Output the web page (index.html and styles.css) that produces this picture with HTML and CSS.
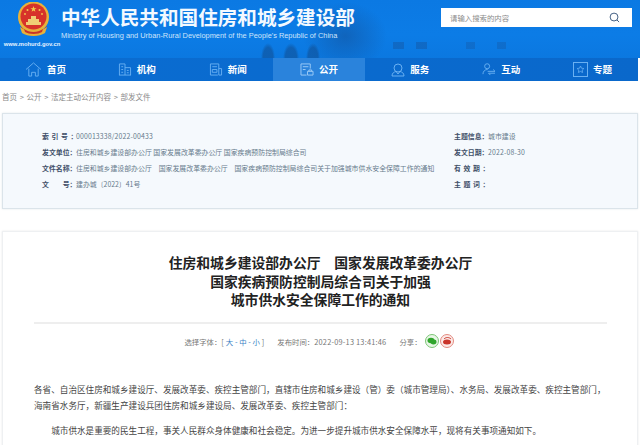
FILE: index.html
```html
<!DOCTYPE html>
<html lang="zh">
<head>
<meta charset="utf-8">
<title>住房和城乡建设部</title>
<link rel="stylesheet" href="styles.css">
</head>
<body>
<header class="top">
  <div class="brand">
    <div class="logo">
      <svg class="emblem" viewBox="0 0 36 36" width="36" height="36">
        <path d="M5 24c1 5 5 9 13 10 8-1 12-5 13-10l-3 3H8z" fill="#c9352a"/>
        <circle cx="17.500" cy="15" r="15.500" fill="#e8b23a"/>
        <circle cx="17.500" cy="14.500" r="13" fill="#d7332a"/>
        <path d="M17.500 4l.8 2.200h2.300l-1.900 1.300.7 2.200-1.900-1.300-1.900 1.300.7-2.200-1.900-1.300h2.300z" fill="#f2cd4f"/>
        <circle cx="11.500" cy="8" r="1" fill="#f2cd4f"/>
        <circle cx="23.500" cy="8" r="1" fill="#f2cd4f"/>
        <circle cx="9" cy="12" r=".9" fill="#f2cd4f"/>
        <circle cx="26" cy="12" r=".9" fill="#f2cd4f"/>
        <path d="M10 20h15v3H10zM12 17h11v3H12zM15 14h5v3h-5z" fill="#f0cf74"/>
        <path d="M4 25c4 3 9 5 13.500 5S27 28 31 25l-2 6c-3 2-7 3-11.500 3S9 33 6 31z" fill="#e8b23a"/>
        <path d="M8 27c3 2 6 3 9.500 3s6.500-1 9.500-3l-1 3c-2 1-5 2-8.500 2S11 31 9 30z" fill="#c9352a"/>
      </svg>
      <span class="domain">www.mohurd.gov.cn</span>
    </div>
    <div class="names">
      <div class="cn-name">中华人民共和国住房和城乡建设部</div>
      <div class="en-name">Ministry of Housing and Urban-Rural Development of the People's Republic of China</div>
    </div>
  </div>
  <form class="search">
    <span class="search-hint">请输入搜索的内容</span>
    <svg viewBox="0 0 12 12" width="11" height="11"><circle cx="5.500" cy="5.500" r="4.300" fill="none" stroke="#33527a" stroke-width="1"/><path d="M8.600 8.600l2.400 2.400" stroke="#33527a" stroke-width="1"/></svg>
  </form>
</header>

<nav class="nav">
  <a class="nav-item"><svg viewBox="0 0 18 16" width="17" height="15"><path d="M1 8l8-7 8 7M4 7v8h3v-4h4v4h3V7" fill="none" stroke="#69b0f2" stroke-width="1"/></svg><b>首页</b></a>
  <a class="nav-item"><svg viewBox="0 0 14 14" width="14" height="13"><path d="M1 13V1h6v12M7 5h6v8M.5 13h13M3 4h2M3 7h2M3 10h2M9 8h2M9 10.500h2" fill="none" stroke="#69b0f2" stroke-width="1"/></svg><b>机构</b></a>
  <a class="nav-item"><svg viewBox="0 0 14 14" width="14" height="13"><path d="M9 13H1V1h9v12h3V6h-3M3 4h5M3 7h5v3H3z" fill="none" stroke="#69b0f2" stroke-width="1"/></svg><b>新闻</b></a>
  <a class="nav-item active"><svg viewBox="0 0 15 14" width="14" height="13"><path d="M7 13H1V1h10v5M3 4h6M3 7h3M8 9h6v4H8zM9.500 9V7.500h3V9" fill="none" stroke="#9fcdf7" stroke-width="1"/></svg><b>公开</b></a>
  <a class="nav-item"><svg viewBox="0 0 14 14" width="14" height="14"><circle cx="7" cy="5" r="4" fill="none" stroke="#69b0f2"/><path d="M1 13c0-3 2-4 4-4.500L7 11l2-2.500c2 .5 4 1.500 4 4.500z" fill="none" stroke="#69b0f2"/></svg><b>服务</b></a>
  <a class="nav-item"><svg viewBox="0 0 15 14" width="14" height="13"><circle cx="5.500" cy="3.500" r="2.700" fill="none" stroke="#69b0f2"/><path d="M1 12c0-3 2-5 5-5M6 9h8l-2-2M14 11H7l2 2" fill="none" stroke="#69b0f2"/></svg><b>互动</b></a>
  <a class="nav-item"><svg viewBox="0 0 15 15" width="15" height="15"><rect x=".5" y=".5" width="14" height="14" fill="none" stroke="#69b0f2"/><path d="M7.500 4l1 2.200 2.400.3-1.700 1.600.4 2.400-2.100-1.100-2.100 1.100.4-2.400-1.700-1.600 2.400-.3z" fill="none" stroke="#69b0f2" stroke-width=".8"/></svg><b>专题</b></a>
</nav>

<div class="crumb">首页 &gt; 公开 &gt; 法定主动公开内容 &gt; 部发文件</div>

<section class="info">
  <div class="info-main">
    <div class="row"><span class="label"><span class="spaced">索引号</span>&#xFF1A;</span><span class="num">000013338/2022-00433</span></div>
    <div class="row"><span class="label">发文单位&#xFF1A;</span><span>住房和城乡建设部办公厅 国家发展改革委办公厅 国家疾病预防控制局综合司</span></div>
    <div class="row"><span class="label">文件名称&#xFF1A;</span><span>住房和城乡建设部办公厅&#x3000;国家发展改革委办公厅&#x3000;国家疾病预防控制局综合司关于加强城市供水安全保障工作的通知</span></div>
    <div class="row"><span class="label">文&#x3000;&#x3000;号&#xFF1A;</span><span>建办城〔2022〕41号</span></div>
  </div>
  <div class="info-side">
    <div class="row"><span class="label">主题信息&#xFF1A;</span><span>城市建设</span></div>
    <div class="row"><span class="label">发文日期&#xFF1A;</span><span class="num">2022-08-30</span></div>
    <div class="row"><span class="label"><span class="spaced">有效期</span>&#xFF1A;</span></div>
    <div class="row"><span class="label"><span class="spaced">主题词</span>&#xFF1A;</span></div>
  </div>
</section>

<main class="article">
  <h1 class="title">住房和城乡建设部办公厅&#x3000;国家发展改革委办公厅<br>国家疾病预防控制局综合司关于加强<br>城市供水安全保障工作的通知</h1>
  <div class="meta">
    <span>选择字体&#xFF1A;[<span class="sizes">大 - 中 - 小</span>]</span>
    <span>发布时间&#xFF1A;<span class="date">2022-09-13 13:41:46</span></span>
    <span class="share">分享&#xFF1A;
      <svg viewBox="0 0 14 14" width="14" height="14"><circle cx="7" cy="7" r="6.500" fill="#e8f6e6" stroke="#7cc576"/><ellipse cx="6" cy="6.500" rx="3.500" ry="2.800" fill="#2fa52c"/><ellipse cx="8.500" cy="8" rx="3" ry="2.400" fill="#2fa52c"/></svg>
      <svg viewBox="0 0 14 14" width="14" height="14"><circle cx="7" cy="7" r="6.500" fill="#fbe9e6" stroke="#e28a80"/><ellipse cx="7" cy="8" rx="4" ry="2.500" fill="#c9342a"/><path d="M4 5c2-2 5-2 7 0" fill="none" stroke="#c9342a"/></svg>
    </span>
  </div>
  <div class="body">
    <p class="lead">各省、自治区住房和城乡建设厅、发展改革委、疾控主管部门&#xFF0C;直辖市住房和城乡建设&#xFF08;管&#xFF09;委&#xFF08;城市管理局&#xFF09;、水务局、发展改革委、疾控主管部门&#xFF0C;海南省水务厅&#xFF0C;新疆生产建设兵团住房和城乡建设局、发展改革委、疾控主管部门&#xFF1A;</p>
    <p class="para">城市供水是重要的民生工程&#xFF0C;事关人民群众身体健康和社会稳定。为进一步提升城市供水安全保障水平&#xFF0C;现将有关事项通知如下。</p>
  </div>
</main>
</body>
</html>
```
FILE: styles.css
```css
* { box-sizing: border-box; }
html, body { margin: 0; height: 445px; overflow: hidden; background: #fff; }
body { font-family: "Noto Sans CJK SC", "Noto Sans", sans-serif; color: #333; }

.top {
  height: 58px;
  display: flex;
  justify-content: space-between;
  padding: 2px 8px 0 7px;
  background:
    radial-gradient(ellipse 7px 15px at 268px 58px, rgba(16,80,150,.6) 70%, transparent),
    radial-gradient(ellipse 8px 15px at 291px 58px, rgba(16,80,150,.6) 70%, transparent),
    radial-gradient(ellipse 7px 15px at 313px 58px, rgba(16,80,150,.6) 70%, transparent),
    linear-gradient(rgba(20,85,160,.45), rgba(20,85,160,.45)) 393px 42px / 11px 7px no-repeat,
    linear-gradient(rgba(20,85,160,.45), rgba(20,85,160,.45)) 416px 42px / 11px 7px no-repeat,
    linear-gradient(rgba(20,85,160,.35), rgba(20,85,160,.35)) 466px 42px / 9px 7px no-repeat,
    linear-gradient(rgba(20,85,160,.35), rgba(20,85,160,.35)) 497px 42px / 9px 7px no-repeat,
    radial-gradient(ellipse 42px 34px at 345px 36px, rgba(18,84,160,.6), transparent),
    linear-gradient(180deg, #0b79e3 0%, #0c7ce6 60%, #0b78e0 100%);
}
.brand { display: flex; gap: 4px; }
.logo { width: 50px; display: flex; flex-direction: column; align-items: center; }
.emblem { display: block; margin-left: 3px; }
.domain { font: bold 5.800px "Liberation Sans", sans-serif; color: #e6f2ff; margin-top: 3px; white-space: nowrap; }
.names { padding-top: 3px; }
.cn-name { font-size: 19.600px; font-weight: 700; line-height: 24px; color: #f3f9ff; white-space: nowrap; }
.en-name { font: 7.400px/10px "Liberation Sans", sans-serif; color: #cfe5fb; margin-top: 2px; white-space: nowrap; }
.search {
  width: 191px; height: 19px; margin-top: 6px;
  background: #fff;
  display: flex; align-items: center; justify-content: space-between;
  padding: 0 12px 0 9px;
}
.search-hint { font-size: 7.400px; color: #8a8a8a; }

.nav {
  height: 23px;
  margin-right: 2px;
  display: grid;
  grid-template-columns: repeat(7, 1fr);
  background: linear-gradient(90deg, #0a6dd2, #0a68cb);
}
.nav-item { display: flex; align-items: center; justify-content: center; gap: 5px; color: #fff; }
.nav-item b { font-size: 9.500px; line-height: 1; }
.active { background: #2a83dc; }

.crumb { height: 32px; padding: 10px 2px 0; font-size: 7.500px; word-spacing: 1px; line-height: 12px; color: #8a8a8a; white-space: nowrap; }

.info {
  height: 96px;
  margin: 0 2px;
  padding: 13.500px 0 0 39px;
  display: flex;
  background: #f5f9fd;
  border: 1px solid #dbe4ea;
  box-shadow: 0 0 2px #e3e8ec;
}
.info-main { width: 412px; }
.info-side { flex: 1; }
.row { height: 16px; display: flex; align-items: center; font-size: 6.900px; color: #667a8c; white-space: pre; }
.label { width: 34px; flex: none; font-weight: 700; color: #3f4f68; }
.spaced { letter-spacing: 2.600px; }
.num { letter-spacing: .15px; }

.article {
  margin: 22px 2px 0;
  height: 300px;
  padding: 0 30px 0 31px;
  border: 1px solid #eef0f2;
  box-shadow: 0 0 2px #e8e8e8;
}
.title {
  margin: 0;
  height: 92px;
  padding-top: 21px;
  border-bottom: 2px solid #eee;
  font-size: 13.800px;
  line-height: 18.500px;
  font-weight: 700;
  color: #222;
  text-align: center;
}
.meta {
  height: 34px;
  padding-right: 3px;
  display: flex;
  justify-content: center;
  align-items: center;
  gap: 13px;
  font-size: 7.400px;
  color: #777;
}
.sizes { color: #3a7fc4; padding: 0 2px; }
.date { letter-spacing: .2px; }
.share { display: flex; align-items: center; gap: 1px; }
.share svg:first-of-type { margin-left: 2px; }
.body { padding-top: 23px; font-size: 8.600px; line-height: 16px; color: #444; }
.body p { margin: 0 0 9px; }
.para { text-indent: 2em; }
```
